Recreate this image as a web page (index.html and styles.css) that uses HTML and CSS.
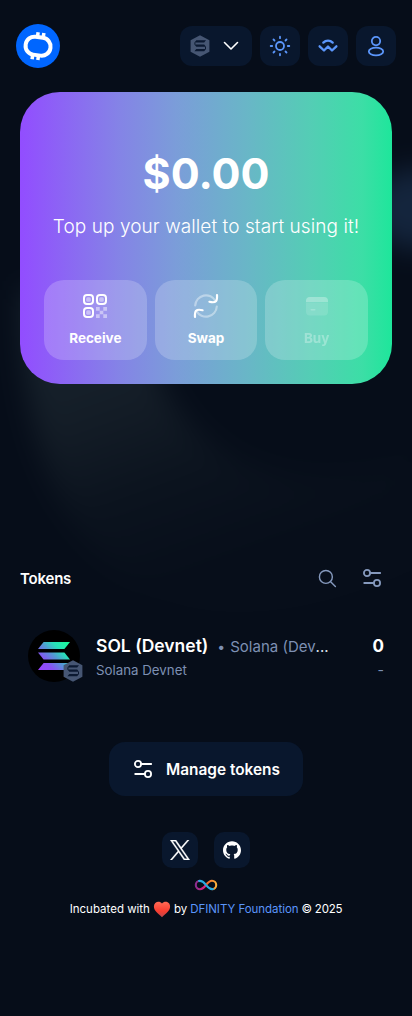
FILE: index.html
```html
<!DOCTYPE html>
<html lang="en">
<head>
<meta charset="utf-8">
<title>Wallet</title>
<link rel="stylesheet" href="styles.css">
</head>
<body>
<svg class="defs" width="0" height="0" aria-hidden="true">
  <symbol id="hex" viewBox="0 0 20 22"><path fill="#465673" d="M10 .2 19.4 5.3V16.7L10 21.8.6 16.7V5.3z"/><g fill="#0b1931"><path d="M6.300 5.300H16l-1.800 2.200H4.400z"/><path d="M4.400 9.600h9.800l1.800 2.200H6.300z"/><path d="M6.300 14h9.700l-1.800 2.200H4.400z"/><path d="M4.400 7.500h1v2.100h-1zM15 11.800h1V14h-1z"/></g></symbol>
  <symbol id="sliders" viewBox="0 0 20 20"><g fill="none" stroke="currentColor" stroke-width="1.8" stroke-linecap="round"><circle cx="5" cy="5" r="3.1"/><path d="M8.3 5H18.2M2.2 15H11.7"/><circle cx="15" cy="15" r="3.1"/></g></symbol>
</svg>
<svg class="backdrop" viewBox="0 0 412 1016" aria-hidden="true">
  <defs>
    <filter id="soft" x="-30%" y="-30%" width="160%" height="160%" color-interpolation-filters="sRGB"><feGaussianBlur stdDeviation="14"/></filter>
    <linearGradient id="arc" x1="60" y1="340" x2="150" y2="590" gradientUnits="userSpaceOnUse"><stop offset="0" stop-color="#17232d"/><stop offset=".3" stop-color="#141d27"/><stop offset=".65" stop-color="#0b131e"/><stop offset="1" stop-color="#070e1a"/></linearGradient>
  </defs>
  <rect width="412" height="1016" fill="#060d19"/>
  <g filter="url(#soft)"><rect x="-60" y="-60" width="532" height="1136" fill="#060d19"/><path fill="url(#arc)" d="M22 290C20 420 50 520 120 575S300 620 412 570V460C260 510 150 440 136 290z"/><ellipse cx="420" cy="209" rx="52" ry="40" fill="#14253d"/></g>
</svg>

<header class="header">
  <svg class="logo" width="44" height="44" viewBox="0 0 44 44"><circle cx="22" cy="22" r="22" fill="#06f"/><g fill="none" stroke="#fff" transform="rotate(8 22 22)"><rect x="9.600" y="13.200" width="25" height="18" rx="8.800" stroke-width="4"/><path stroke-width="3.500" d="M20.200 8.300v5M26 8.300v5M18 31v5M23.800 31v5"/></g></svg>
  <nav class="nav">
    <button class="tile network"><svg width="20" height="22"><use href="#hex"/></svg><svg width="16" height="10" viewBox="0 0 16 10" fill="none" stroke="#fff" stroke-width="1.600" stroke-linecap="round" stroke-linejoin="round"><path d="M1.500 1.500 8 8l6.500-6.500"/></svg></button>
    <button class="tile"><svg width="22" height="22" viewBox="0 0 22 22" fill="none" stroke="currentColor" stroke-width="1.8" stroke-linecap="round"><circle cx="11" cy="11" r="4"/><path d="M11 1.700v1.500M11 18.800v1.500M1.700 11h1.500M18.800 11h1.500M4.500 4.500l1 1M16.500 16.500l1 1M17.500 4.500l-1 1M5.500 16.500l-1 1"/></svg></button>
    <button class="tile"><svg width="22" height="16" viewBox="0 0 22 16" fill="none" stroke="currentColor" stroke-width="2.300" stroke-linecap="round" stroke-linejoin="round"><path d="M6.300 4.600c2.600-2.600 6.800-2.600 9.400 0M2.600 8.300 7 12.500l4-4 4 4 4.400-4.200"/></svg></button>
    <button class="tile"><svg width="20" height="22" viewBox="0 0 20 22" fill="none" stroke="currentColor" stroke-width="1.800"><circle cx="10" cy="6.100" r="4.200"/><ellipse cx="10" cy="16.500" rx="7.200" ry="3.800"/></svg></button>
  </nav>
</header>

<main>
  <section class="hero">
    <div class="balance">$0.00</div>
    <p class="hint">Top up your wallet to start using it!</p>
    <div class="actions">
      <button class="action">
        <svg width="26" height="26" viewBox="0 0 26 26"><g fill="none" stroke="#fff" stroke-width="2"><rect x="2" y="2" width="9" height="9" rx="3"/><rect x="15" y="2" width="9" height="9" rx="3"/><rect x="2" y="15" width="9" height="9" rx="3"/></g><g fill="#fff" opacity=".45"><rect x="4.200" y="4.200" width="4.600" height="4.600" rx="1.500"/><rect x="17.200" y="4.200" width="4.600" height="4.600" rx="1.500"/><rect x="4.200" y="17.200" width="4.600" height="4.600" rx="1.500"/><path d="M14 14h3.700v3.700H14zM21.300 14H25v3.700h-3.700zM17.700 17.700h3.600v3.600h-3.600zM14 21.300h3.700V25H14zM21.300 21.300H25V25h-3.700z"/></g></svg>
        <span>Receive</span></button>
      <button class="action">
        <svg width="26" height="26" viewBox="0 0 26 26" fill="none" stroke="#fff" stroke-width="2.200" stroke-linecap="round"><path opacity=".4" d="M2.200 12.500A10.800 10.800 0 0 1 22.500 8M23.800 13.500A10.800 10.800 0 0 1 3.500 18"/><path d="M24 2c.4 6.200-.8 8.400-7.600 6.800M2 24c-.4-6.200.8-8.400 7.600-6.800"/></svg>
        <span>Swap</span></button>
      <button class="action disabled" disabled>
        <svg width="26" height="26" viewBox="0 0 26 26" fill="#fff"><path d="M2 9.300V8a4 4 0 0 1 4-4h14a4 4 0 0 1 4 4v1.300z"/><path opacity=".4" d="M2 10h22v8.500a4 4 0 0 1-4 4H6a4 4 0 0 1-4-4z"/><rect x="6.500" y="16" width="5" height="1.600" rx=".8"/></svg>
        <span>Buy</span></button>
    </div>
  </section>

  <section class="tokens">
    <div class="tokens-head">
      <h2>Tokens</h2>
      <svg class="search" width="19" height="19" viewBox="0 0 20 20" fill="none" stroke="currentColor" stroke-width="1.500" stroke-linecap="round"><circle cx="8.300" cy="8.300" r="6.800"/><path d="m13.300 13.300 5 5"/></svg>
      <svg width="20" height="20"><use href="#sliders"/></svg>
    </div>
    <div class="token">
      <div class="token-logo">
        <svg width="52" height="52" viewBox="0 0 52 52"><defs><linearGradient id="sol" x1="12" y1="40" x2="40" y2="12" gradientUnits="userSpaceOnUse"><stop stop-color="#9945ff"/><stop offset=".25" stop-color="#8752f3"/><stop offset=".5" stop-color="#5497d5"/><stop offset=".72" stop-color="#28e0b9"/><stop offset="1" stop-color="#19fb9b"/></linearGradient></defs><circle cx="26" cy="26" r="26"/><g fill="url(#sol)"><path d="M15.600 12H42l-5.600 7H10z"/><path d="M10 22.500h26.400l5.600 7H15.600z"/><path d="M15.600 33H42l-5.600 7H10z"/></g></svg>
        <svg class="badge" width="20" height="22"><use href="#hex"/></svg>
      </div>
      <div class="token-text">
        <div class="token-name"><b>SOL (Devnet)</b><i>•</i><span>Solana (Dev</span><em>...</em></div>
        <div class="token-network">Solana Devnet</div>
      </div>
      <div class="token-amount"><b>0</b><span>-</span></div>
    </div>
    <button class="manage"><svg width="20" height="20"><use href="#sliders"/></svg><span>Manage tokens</span></button>
  </section>
</main>

<footer class="footer">
  <div class="social">
    <a><svg width="20" height="20" viewBox="0 0 24 24" fill="#fff" stroke="#fff" stroke-width=".4"><path d="M14.234 10.162 22.977 0h-2.072l-7.591 8.824L7.251 0H.258l9.168 13.343L.258 24H2.330l8.016-9.318L16.749 24h6.993zm-2.837 3.299-.929-1.329L3.076 1.560h3.182l5.965 8.532.929 1.329 7.754 11.090h-3.182z"/></svg></a>
    <a><svg width="18" height="18" viewBox="0 0 24 24" fill="#fff"><path d="M12 .297c-6.630 0-12 5.373-12 12 0 5.303 3.438 9.800 8.205 11.385.6.113.820-.258.820-.577 0-.285-.010-1.040-.015-2.040-3.338.724-4.042-1.610-4.042-1.610C4.422 18.070 3.633 17.700 3.633 17.700c-1.087-.744.084-.729.084-.729 1.205.084 1.838 1.236 1.838 1.236 1.070 1.835 2.809 1.305 3.495.998.108-.776.417-1.305.760-1.605-2.665-.300-5.466-1.332-5.466-5.930 0-1.310.465-2.380 1.235-3.220-.135-.303-.540-1.523.105-3.176 0 0 1.005-.322 3.300 1.230.960-.267 1.980-.399 3-.405 1.020.006 2.040.138 3 .405 2.280-1.552 3.285-1.230 3.285-1.230.645 1.653.240 2.873.120 3.176.765.840 1.230 1.910 1.230 3.220 0 4.610-2.805 5.625-5.475 5.920.420.360.810 1.096.810 2.220 0 1.606-.015 2.896-.015 3.286 0 .315.210.690.825.570C20.565 22.092 24 17.592 24 12.297c0-6.627-5.373-12-12-12"/></svg></a>
  </div>
  <svg class="infinity" width="24" height="12" viewBox="0 0 24 12" fill="none" stroke-width="2.100"><defs><linearGradient id="warm"><stop stop-color="#f15a24"/><stop offset="1" stop-color="#fbb03b"/></linearGradient><linearGradient id="pink"><stop stop-color="#8a2d90"/><stop offset="1" stop-color="#ed1e79"/></linearGradient></defs><path stroke="url(#warm)" d="M12 6c2-2.600 3.700-4.200 6-4.200a4.200 4.200 0 0 1 0 8.400"/><path stroke="url(#pink)" d="M12 6c-2 2.600-3.700 4.200-6 4.200a4.200 4.200 0 0 1 0-8.400"/><path stroke="#29abe2" d="M4.300 2.200C8 .600 10 3.500 12 6s4 5.400 7.700 3.800"/></svg>
  <p class="credit"><span>Incubated with</span><svg width="18" height="17" viewBox="0 0 18 17"><defs><linearGradient id="heart" x1="0" y1="0" x2="0" y2="1"><stop stop-color="#ff6a55"/><stop offset=".6" stop-color="#f83d30"/><stop offset="1" stop-color="#b9474d"/></linearGradient></defs><path fill="url(#heart)" d="M9 2.500C6.500-.5.900.7.900 5.600.9 10 5 12.500 9 16.300c4-3.800 8.100-6.300 8.100-10.700C17.100.7 11.500-.5 9 2.500z"/></svg><span>by</span><a>DFINITY Foundation</a><span class="year">© 2025</span></p>
</footer>
</body>
</html>
```

FILE: styles.css
```css
* { box-sizing: border-box; }
body { margin: 0; height: 1016px; overflow: hidden; background: #060d19; color: #fff; font-family: Inter, "Liberation Sans", sans-serif; }
.defs, .backdrop { position: absolute; }
.backdrop { inset: 0; width: 412px; height: 1016px; z-index: -1; }
svg { display: block; flex: none; }
button { margin: 0; padding: 0; border: 0; color: inherit; font: inherit; }
h2, p { margin: 0; }

.header { display: flex; align-items: center; justify-content: space-between; padding: 24px 16px; }
.nav { display: flex; gap: 8px; }
.tile { display: flex; align-items: center; justify-content: center; width: 40px; height: 40px; border-radius: 12px; background: #09172d; color: #5b96fb; }
.network { width: 72px; gap: 13px; padding-right: 3px; }

.hero { display: flex; flex-direction: column; align-items: center; height: 292px; margin: 0 20px; padding: 56px 24px 24px; border-radius: 40px; background: linear-gradient(90deg, #924dff 0%, #8484e6 27%, #7b9dd9 42%, #69b6c7 61%, #54cdb5 78%, #3cdea6 92%, #1ee69b 100%); }
.balance { height: 50px; font-size: 43px; font-weight: 700; line-height: 50px; }
.hint { margin-top: 15px; font-size: 19px; font-weight: 300; line-height: 28px; letter-spacing: .08px; white-space: nowrap; }
.actions { display: grid; grid-template-columns: repeat(3, 1fr); gap: 8px; width: 100%; margin-top: auto; }
.action { display: flex; flex-direction: column; align-items: center; gap: 9px; height: 80px; padding-top: 13px; border-radius: 20px; background: rgba(255, 255, 255, .2); font-size: 13.500px; font-weight: 700; line-height: 20px; }
.disabled > * { opacity: .3; }

.tokens { display: flex; flex-direction: column; padding: 0 20px; margin-top: 182px; }
.tokens-head { display: flex; align-items: center; height: 24px; padding-right: 10px; color: #8599bd; }
.tokens-head h2 { color: #fff; font-size: 15px; font-weight: 600; letter-spacing: -.2px; }
.search { margin-left: auto; margin-right: 25px; }
.token { display: flex; height: 52px; margin-top: 40px; padding: 0 8px; }
.token-logo { position: relative; width: 52px; margin-right: 16px; }
.badge { position: absolute; left: 35px; top: 30px; }
.token-text { flex: 1; }
.token-name { display: flex; align-items: baseline; height: 30px; font-size: 15px; line-height: 32px; color: #7d90b3; white-space: nowrap; }
.token-name b { font-size: 17.500px; font-weight: 600; color: #fff; }
.token-name i { margin: 0 5px 0 9px; font-size: 14px; font-style: normal; }
.token-name em { color: #dbe2ed; font-style: normal; }
.token-network { font-size: 13.300px; line-height: 20px; color: #7d90b3; }
.token-amount { display: flex; flex-direction: column; align-items: flex-end; font-size: 14px; line-height: 20px; color: #7d90b3; }
.token-amount b { color: #fff; font-size: 17px; height: 30px; line-height: 32px; }
.manage { display: flex; align-items: center; align-self: center; gap: 13px; width: 194px; height: 54px; margin-top: 60px; padding-left: 24px; border-radius: 16px; background: #09172d; font-size: 15.400px; font-weight: 600; white-space: nowrap; }

.footer { display: flex; flex-direction: column; align-items: center; margin-top: 36px; }
.social { display: flex; gap: 16px; }
.social a { display: flex; align-items: center; justify-content: center; width: 36px; height: 36px; border-radius: 10px; background: #09172d; }
.infinity { margin-top: 11px; }
.credit { display: flex; align-items: center; gap: 3px; margin-top: 8px; font-size: 11.500px; line-height: 20px; white-space: nowrap; }
.credit a { color: #5b96fb; letter-spacing: -.05px; }
.year { letter-spacing: -.2px; }
```
